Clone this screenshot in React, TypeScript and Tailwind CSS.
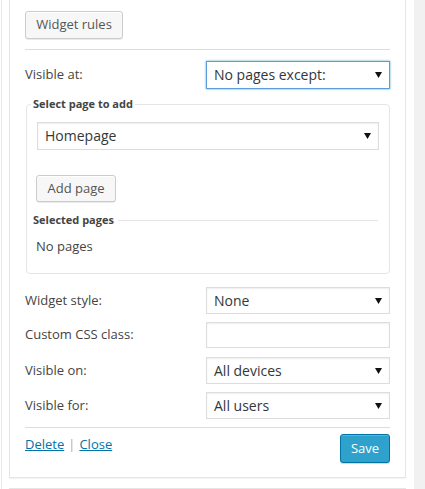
import React from 'react';

const font = { fontFamily: '"Open Sans", "Liberation Sans", sans-serif' };

function Caret() {
  return (
    <svg width="7" height="6" viewBox="0 0 7 6" className="shrink-0">
      <path d="M0 0 L7 0 L3.5 6 Z" fill="#111" />
    </svg>
  );
}

function FakeSelect({ value, focused = false, className = '' }: { value: string; focused?: boolean; className?: string }) {
  return (
    <div
      className={
        'flex h-[27px] items-center justify-between bg-white pl-[7px] pr-[7px] text-[14px] text-[#32373c] ' +
        (focused
          ? 'border border-[#5b9dd9] shadow-[0_0_2px_rgba(30,140,190,0.8)] '
          : 'border border-[#ddd] shadow-[inset_0_1px_2px_rgba(0,0,0,0.07)] ') +
        className
      }
    >
      <span className="leading-none">{value}</span>
      <Caret />
    </div>
  );
}

function Button({ children, className = '' }: { children: React.ReactNode; className?: string }) {
  return (
    <div
      className={
        'flex items-center justify-center rounded-[3px] border border-[#ccc] bg-[#f7f7f7] text-[13px] text-[#555] shadow-[inset_0_1px_0_#fff,0_1px_0_rgba(0,0,0,0.08)] ' +
        className
      }
    >
      {children}
    </div>
  );
}

function Row({ label, children, className = '' }: { label: string; children: React.ReactNode; className?: string }) {
  return (
    <div className={'flex items-center ' + className}>
      <div className="w-[181px] text-[13px] text-[#444]">{label}</div>
      <div className="w-[184px]">{children}</div>
    </div>
  );
}

export default function App() {
  return (
    <div className="flex h-[489px] w-[425px] overflow-hidden bg-white" style={font}>
      <div className="w-px shrink-0" />
      <div className="w-px shrink-0 bg-[#e8e8e8]" />

      <div className="w-[412px] shrink-0 pl-[7px]">
        {/* widget panel */}
        <div className="w-[397px] border-x border-b border-[#e5e5e5] bg-white px-[15px] pb-[14px] pt-[11px] shadow-[0_1px_1px_rgba(0,0,0,0.04)]">
          <Button className="h-[28px] w-[98px]">Widget rules</Button>

          <div className="mt-[10px] h-px bg-[#ddd]" />

          <Row label="Visible at:" className="mt-[11px]">
            <FakeSelect value="No pages except:" focused className="h-[28px]" />
          </Row>

          <fieldset className="mt-[7px] ml-px rounded-[4px] border border-[#e5e5e5] px-[4px] pb-[18px]">
            <legend className="px-[2px] text-[11px] font-bold leading-4 text-[#444]">Select page to add</legend>
            <div className="px-[6px]">
              <FakeSelect value="Homepage" className="mt-[10px] h-[28px] pr-[6px]" />
              <Button className="mt-[25px] h-[27px] w-[80px] -ml-px">Add page</Button>
            </div>
            <div className="mt-[10px] flex h-4 items-center pl-[2px] pr-[7px]">
              <span className="text-[11px] font-bold text-[#444]">Selected pages</span>
              <div className="ml-[4px] h-px flex-1 bg-[#e5e5e5]" />
            </div>
            <div className="mt-[9px] pl-[5px] text-[13px] leading-[18px] text-[#444]">No pages</div>
          </fieldset>

          <Row label="Widget style:" className="mt-[13px]">
            <FakeSelect value="None" />
          </Row>

          <Row label="Custom CSS class:" className="mt-[8px]">
            <div className="h-[26px] border border-[#ddd] bg-white shadow-[inset_0_1px_2px_rgba(0,0,0,0.07)]" />
          </Row>

          <Row label="Visible on:" className="mt-[9px]">
            <FakeSelect value="All devices" />
          </Row>

          <Row label="Visible for:" className="mt-[8px]">
            <FakeSelect value="All users" />
          </Row>

          <div className="mt-[8px] h-px bg-[#ddd]" />

          <div className="mt-[6px] flex items-start justify-between">
            <div className="pt-[1px] text-[13px] leading-[18px]">
              <span className="text-[#0073aa] underline">Delete</span>
              <span className="mx-[4px] text-[#d9a35a]">|</span>
              <span className="text-[#0073aa] underline">Close</span>
            </div>
            <div className="flex h-[29px] w-[50px] items-center justify-center rounded-[3px] border border-[#0074a2] bg-[#2ea2cc] text-[13px] text-white shadow-[inset_0_1px_0_rgba(120,200,230,0.5),0_1px_0_rgba(0,0,0,0.15)]">
              Save
            </div>
          </div>
        </div>

        {/* next widget panel */}
        <div className="mt-[10px] h-[40px] w-[397px] border border-[#e5e5e5] bg-white" />
      </div>

      <div className="flex-1 bg-[#f1f1f1]" />
    </div>
  );
}
